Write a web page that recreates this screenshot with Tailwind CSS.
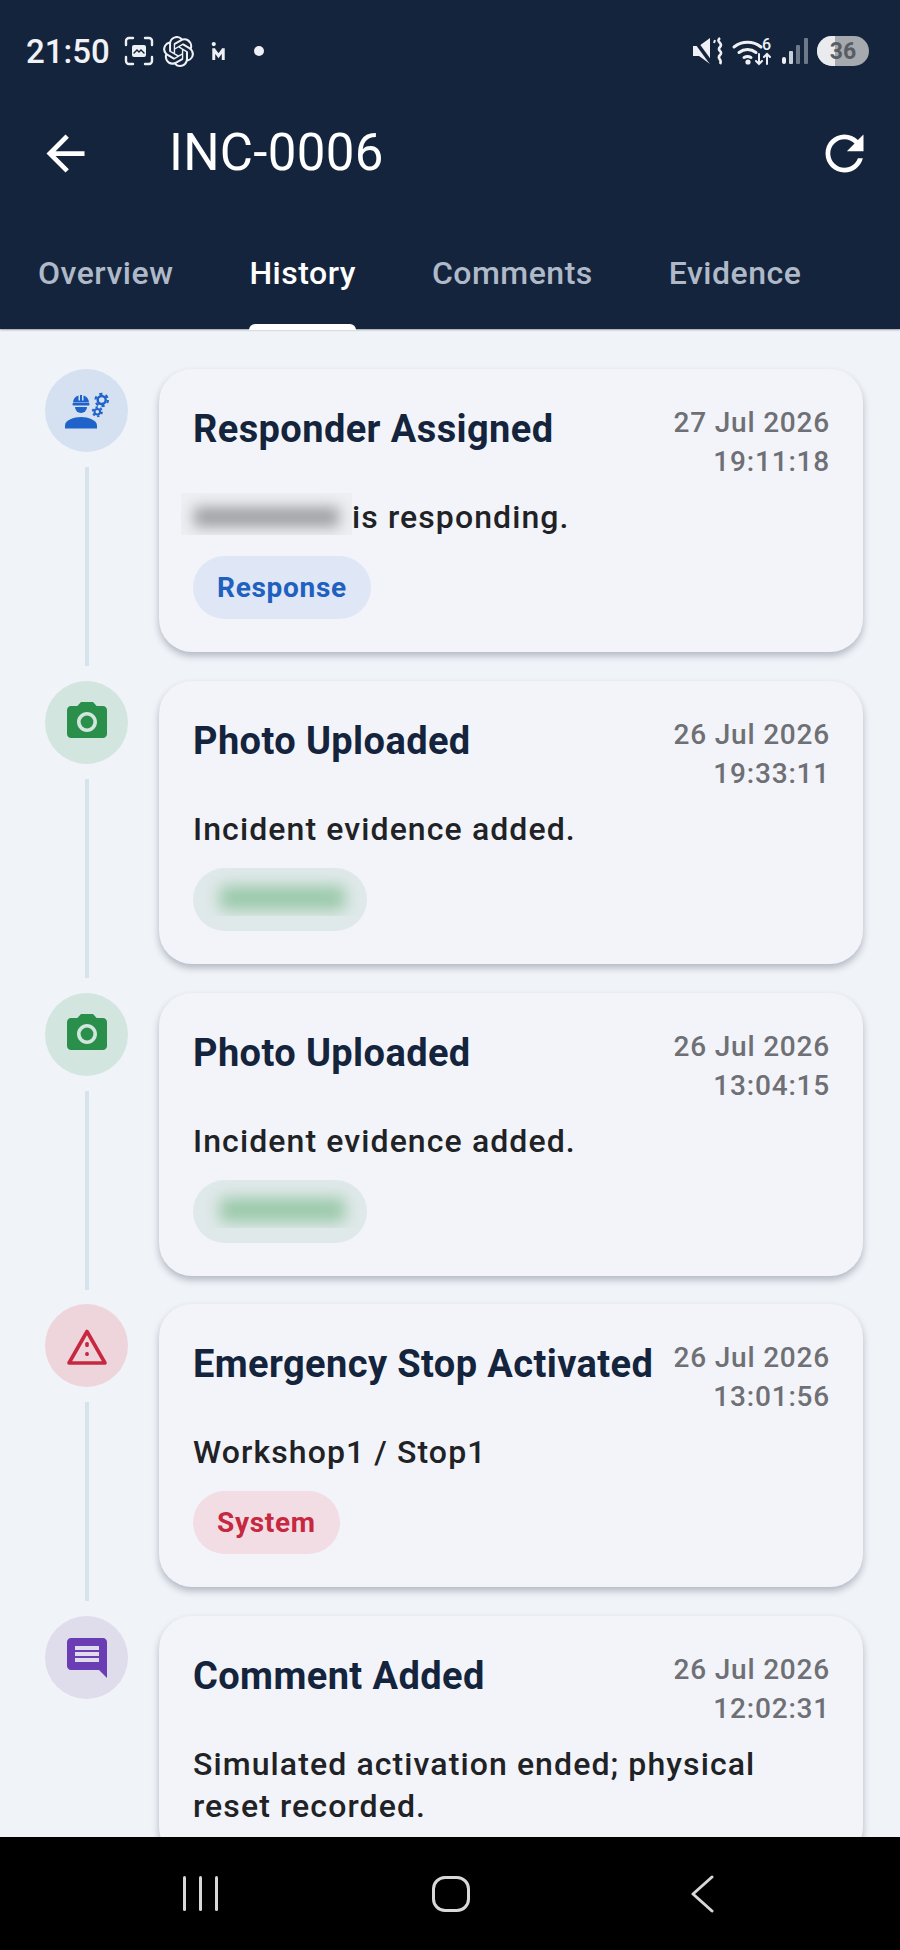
<!DOCTYPE html>
<html lang="en">
<head>
    <meta charset="UTF-8">
    <meta name="viewport" content="width=device-width, initial-scale=1.0">
    <title>INC-0006 - History</title>
    <script src="https://cdn.jsdelivr.net/npm/@tailwindcss/browser@4"></script>
</head>
<body class="bg-[#f0f3f8] font-['Roboto',sans-serif]">
<div class="w-[900px] h-[1950px] flex flex-col overflow-hidden">

    <!-- Header -->
    <header class="h-[329px] shrink-0 bg-[#14243c] text-white flex flex-col relative z-10 shadow-[0_1px_2px_rgba(0,0,0,0.3)]">
        <!-- Status bar -->
        <div class="h-[102px] flex items-center justify-between pl-[26px] pr-[31px]">
            <div class="flex items-center">
                <span class="text-[33px] font-medium leading-none text-[#f0f2f6] w-[98px]">21:50</span>
                <svg class="w-[30px] h-[30px]" viewBox="0 0 30 30" fill="none" stroke="#eef0f4" stroke-width="2.4" stroke-linecap="round">
                    <path d="M2 9V5a3 3 0 0 1 3-3h4M21 2h4a3 3 0 0 1 3 3v4M28 21v4a3 3 0 0 1-3 3h-4M9 28H5a3 3 0 0 1-3-3v-4"/>
                    <rect x="8" y="9" width="14" height="12" rx="2" fill="#eef0f4" stroke="none"/>
                    <path d="M10 17l3-3 2 2 2-2 3 3" stroke="#14243c" stroke-width="1.4"/>
                </svg>
                <svg class="w-[31px] h-[31px] ml-[9px]" viewBox="0 0 24 24" fill="#eef0f4">
                    <path d="M22.2819 9.8211a5.9847 5.9847 0 0 0-.5157-4.9108 6.0462 6.0462 0 0 0-6.5098-2.9A6.0651 6.0651 0 0 0 4.9807 4.1818a5.9847 5.9847 0 0 0-3.9977 2.9 6.0462 6.0462 0 0 0 .7427 7.0966 5.98 5.98 0 0 0 .511 4.9107 6.051 6.051 0 0 0 6.5146 2.9001A5.9847 5.9847 0 0 0 13.2599 24a6.0557 6.0557 0 0 0 5.7718-4.2058 5.9894 5.9894 0 0 0 3.9977-2.9001 6.0557 6.0557 0 0 0-.7475-7.0729zm-9.022 12.6081a4.4755 4.4755 0 0 1-2.8764-1.0408l.1419-.0804 4.7783-2.7582a.7948.7948 0 0 0 .3927-.6813v-6.7369l2.02 1.1686a.071.071 0 0 1 .038.052v5.5826a4.504 4.504 0 0 1-4.4945 4.4944zm-9.6607-4.1254a4.4708 4.4708 0 0 1-.5346-3.0137l.142.0852 4.783 2.7582a.7712.7712 0 0 0 .7806 0l5.8428-3.3685v2.3324a.0804.0804 0 0 1-.0332.0615L9.74 19.9502a4.4992 4.4992 0 0 1-6.1408-1.6464zM2.3408 7.8956a4.485 4.485 0 0 1 2.3655-1.9728V11.6a.7664.7664 0 0 0 .3879.6765l5.8144 3.3543-2.0201 1.1685a.0757.0757 0 0 1-.071 0l-4.8303-2.7865A4.504 4.504 0 0 1 2.3408 7.872zm16.5963 3.8558L13.1038 8.364 15.1192 7.2a.0757.0757 0 0 1 .071 0l4.8303 2.7913a4.4944 4.4944 0 0 1-.6765 8.1042v-5.6772a.79.79 0 0 0-.407-.667zm2.0107-3.0231l-.142-.0852-4.7735-2.7818a.7759.7759 0 0 0-.7854 0L9.409 9.2297V6.8974a.0662.0662 0 0 1 .0284-.0615l4.8303-2.7866a4.4992 4.4992 0 0 1 6.6802 4.66zM8.3065 12.863l-2.02-1.1638a.0804.0804 0 0 1-.038-.0567V6.0742a4.4992 4.4992 0 0 1 7.3757-3.4537l-.142.0805L8.704 5.459a.7948.7948 0 0 0-.3927.6813zm1.0976-2.3654l2.602-1.4998 2.6069 1.4998v2.9994l-2.5974 1.4997-2.6067-1.4997Z"/>
                </svg>
                <svg class="w-[15px] h-[19px] ml-[17px]" viewBox="0 0 14 18" fill="none" stroke="#eef0f4" stroke-width="2.8">
                    <circle cx="2.500" cy="2" r="2" fill="#eef0f4" stroke="none"/>
                    <path d="M2.500 6v11M2.500 7l4.500 6 4.500-6M11.500 6v11"/>
                </svg>
                <span class="w-[10px] h-[10px] rounded-full bg-[#eef0f4] ml-[28px]"></span>
            </div>
            <div class="flex items-center">
                <svg class="w-[30px] h-[28px]" viewBox="0 0 30 28" fill="none">
                    <path d="M0 9h6l11-8v26L6 19H0z" fill="#eef0f4"/>
                    <path d="M0 1l19 26" stroke="#14243c" stroke-width="3.600"/>
                    <path d="M22 3l-1 3" stroke="#eef0f4" stroke-width="2"/>
                    <path d="M27 1c-5 4 4 5 0 9s4 4 0 8 3 4 0 9" stroke="#eef0f4" stroke-width="2.600"/>
                </svg>
                <svg class="w-[41px] h-[30px] ml-[9px] overflow-visible" viewBox="0 0 41 30" fill="none" stroke="#eef0f4" stroke-width="3" stroke-linecap="round">
                    <path d="M2 11a22 22 0 0 1 27 0M7 16.500a14 14 0 0 1 17 0M12 21.500a7 7 0 0 1 7 0"/>
                    <circle cx="16" cy="26" r="2.600" fill="#eef0f4" stroke="none"/>
                    <path d="M27 18v10M24 25l3 3 3-3M35 28V18M32 21l3-3 3 3" stroke-width="2"/>
                    <text x="30" y="14" fill="#eef0f4" stroke="none" font-size="16" font-weight="500" font-family="Roboto, sans-serif">6</text>
                </svg>
                <svg class="w-[26px] h-[28px] ml-[9px]" viewBox="0 0 26 28">
                    <rect x="0" y="20" width="4" height="7" rx="2" fill="#eef0f4"/>
                    <rect x="7" y="14" width="4" height="13" rx="1" fill="#c9ced6"/>
                    <rect x="14" y="8" width="4" height="19" rx="1" fill="#6d7888"/>
                    <rect x="22" y="1" width="4" height="26" rx="1" fill="#6d7888"/>
                </svg>
                <div class="w-[52px] h-[30px] rounded-full bg-[#a6a9ae] ml-[9px] overflow-hidden relative flex items-center justify-center">
                    <div class="absolute left-0 top-0 bottom-0 w-[18px] bg-[#e9ebef]"></div>
                    <span class="relative text-[23px] font-bold text-[#585d65] leading-none">36</span>
                </div>
            </div>
        </div>

        <!-- App bar -->
        <div class="h-[102px] flex items-center justify-between pl-[37px] pr-[27px]">
            <div class="flex items-center">
                <svg class="w-[57px] h-[57px]" viewBox="0 0 24 24" fill="white"><path d="M20 11H7.830l5.590-5.590L12 4l-8 8 8 8 1.410-1.410L7.830 13H20v-2z"/></svg>
                <h1 class="text-[51px] font-normal leading-none ml-[75px] mb-[2px] tracking-[0.3px]">INC-0006</h1>
            </div>
            <svg class="w-[57px] h-[57px]" viewBox="0 0 24 24" fill="white"><path d="M17.650 6.350C16.200 4.900 14.210 4 12 4c-4.420 0-7.990 3.580-7.990 8s3.570 8 7.990 8c3.730 0 6.840-2.550 7.730-6h-2.080c-.82 2.330-3.040 4-5.650 4-3.310 0-6-2.690-6-6s2.690-6 6-6c1.660 0 3.140.69 4.220 1.780L13 11h7V4l-2.350 2.350z"/></svg>
        </div>

        <!-- Tabs -->
        <nav class="flex flex-1 text-[32px] font-medium text-[#b0b9c8] tracking-[0.5px]">
            <a class="px-[38px] pt-[45px]">Overview</a>
            <a class="px-[38px] pt-[45px] text-white relative">History
                <span class="absolute left-[38px] right-[38px] bottom-[-1px] h-[6px] bg-white rounded-t-[6px]"></span>
            </a>
            <a class="px-[38px] pt-[45px]">Comments</a>
            <a class="px-[38px] pt-[45px]">Evidence</a>
        </nav>
    </header>

    <!-- Timeline -->
    <main class="flex-1 min-h-0 overflow-hidden pt-[39px] pl-[45px] pr-[37px] border-t border-[#e3e7ee]">

        <!-- Responder Assigned -->
        <div class="flex gap-[31px] pb-[28.75px]">
            <div class="w-[83px] shrink-0 flex flex-col items-center">
                <div class="w-[83px] h-[83px] rounded-full bg-[#d5e1f1] flex items-center justify-center">
                    <svg class="w-[48px] h-[48px]" viewBox="0 0 48 48" fill="#1f62c9">
                        <path d="M10 15.500a8 8 0 0 1 5.500-7v5h1.500V8h2v5.500h1.500v-5a8 8 0 0 1 5.500 7z"/>
                        <rect x="9.500" y="16" width="17" height="2.500" rx="1"/>
                        <path d="M12 20h12a6 6 0 0 1-12 0z"/>
                        <path d="M2 41.500v-3C2 33 11 30 18 30s16 3 16 8.500v3z"/>
                        <circle cx="38.700" cy="13" r="4" fill="none" stroke="#1f62c9" stroke-width="2.400"/>
                        <circle cx="38.700" cy="13" r="6.200" fill="none" stroke="#1f62c9" stroke-width="2.200" stroke-dasharray="3.200 3.300"/>
                        <circle cx="34.300" cy="24.700" r="2.800" fill="none" stroke="#1f62c9" stroke-width="2"/>
                        <circle cx="34.300" cy="24.700" r="4.600" fill="none" stroke="#1f62c9" stroke-width="1.800" stroke-dasharray="2.400 2.420"/>
                    </svg>
                </div>
                <div class="w-[4px] flex-1 bg-[#d6e2ec] mt-[15px] mb-[-14px]"></div>
            </div>
            <div class="flex-1 min-w-0 bg-[#f3f4f9] rounded-[33px] pt-[34px] px-[34px] pb-[33px] shadow-[0_4px_7px_rgba(40,50,70,0.3)]">
                <div class="flex justify-between">
                    <h2 class="text-[38px] leading-[52px] font-bold text-[#14243c] whitespace-nowrap tracking-[0.4px]">Responder Assigned</h2>
                    <p class="text-[28px] leading-[39px] font-medium text-[#6e7075] text-right tracking-[0.8px] whitespace-nowrap -mr-[1px]">27 Jul 2026<br>19:11:18</p>
                </div>
                <div class="flex items-start mt-[15px] text-[32px] leading-[42px] font-medium text-[#202226] tracking-[1.1px]">
                    <div class="w-[171px] h-[42px] -ml-[12px] -mt-[3px] overflow-hidden flex items-center justify-center bg-[#eeeff3] shrink-0">
                        <div class="w-[145px] h-[20px] mt-[6px] bg-[#a0a1a4] blur-[7px]"></div>
                    </div>
                    <span>is responding.</span>
                </div>
                <div class="mt-[18px] inline-flex h-[63px] items-center px-[24px] rounded-full bg-[#dfe6f5] text-[28px] font-bold text-[#2060bf] tracking-[0.7px]">Response</div>
            </div>
        </div>

        <!-- Photo Uploaded -->
        <div class="flex gap-[31px] pb-[28.75px]">
            <div class="w-[83px] shrink-0 flex flex-col items-center">
                <div class="w-[83px] h-[83px] rounded-full bg-[#d3e5df] flex items-center justify-center">
                    <svg class="w-[48px] h-[48px]" viewBox="0 0 24 24" fill="#2a8f4b"><path fill-rule="evenodd" d="M9 2 7.170 4H4c-1.100 0-2 .9-2 2v12c0 1.100.9 2 2 2h16c1.100 0 2-.9 2-2V6c0-1.100-.9-2-2-2h-3.170L15 2H9zm3 15c-2.760 0-5-2.240-5-5s2.240-5 5-5 5 2.240 5 5-2.240 5-5 5z"/><circle cx="12" cy="12" r="3.200"/></svg>
                </div>
                <div class="w-[4px] flex-1 bg-[#d6e2ec] mt-[15px] mb-[-14px]"></div>
            </div>
            <div class="flex-1 min-w-0 bg-[#f3f4f9] rounded-[33px] pt-[34px] px-[34px] pb-[33px] shadow-[0_4px_7px_rgba(40,50,70,0.3)]">
                <div class="flex justify-between">
                    <h2 class="text-[38px] leading-[52px] font-bold text-[#14243c] whitespace-nowrap tracking-[0.4px]">Photo Uploaded</h2>
                    <p class="text-[28px] leading-[39px] font-medium text-[#6e7075] text-right tracking-[0.8px] whitespace-nowrap -mr-[1px]">26 Jul 2026<br>19:33:11</p>
                </div>
                <p class="mt-[15px] text-[32px] leading-[42px] font-medium text-[#202226] tracking-[1.1px]">Incident evidence added.</p>
                <div class="mt-[18px] w-[174px] h-[63px] rounded-full bg-[#e0e9ea] overflow-hidden">
                    <div class="w-[155px] h-[48px] ml-[12px] overflow-hidden flex items-center justify-center">
                        <div class="w-[125px] h-[24px] mt-[12px] bg-[#98c8a8] blur-[8px]"></div>
                    </div>
                </div>
            </div>
        </div>

        <div class="flex gap-[31px] pb-[28.75px]">
            <div class="w-[83px] shrink-0 flex flex-col items-center">
                <div class="w-[83px] h-[83px] rounded-full bg-[#d3e5df] flex items-center justify-center">
                    <svg class="w-[48px] h-[48px]" viewBox="0 0 24 24" fill="#2a8f4b"><path fill-rule="evenodd" d="M9 2 7.170 4H4c-1.100 0-2 .9-2 2v12c0 1.100.9 2 2 2h16c1.100 0 2-.9 2-2V6c0-1.100-.9-2-2-2h-3.170L15 2H9zm3 15c-2.760 0-5-2.240-5-5s2.240-5 5-5 5 2.240 5 5-2.240 5-5 5z"/><circle cx="12" cy="12" r="3.200"/></svg>
                </div>
                <div class="w-[4px] flex-1 bg-[#d6e2ec] mt-[15px] mb-[-14px]"></div>
            </div>
            <div class="flex-1 min-w-0 bg-[#f3f4f9] rounded-[33px] pt-[34px] px-[34px] pb-[33px] shadow-[0_4px_7px_rgba(40,50,70,0.3)]">
                <div class="flex justify-between">
                    <h2 class="text-[38px] leading-[52px] font-bold text-[#14243c] whitespace-nowrap tracking-[0.4px]">Photo Uploaded</h2>
                    <p class="text-[28px] leading-[39px] font-medium text-[#6e7075] text-right tracking-[0.8px] whitespace-nowrap -mr-[1px]">26 Jul 2026<br>13:04:15</p>
                </div>
                <p class="mt-[15px] text-[32px] leading-[42px] font-medium text-[#202226] tracking-[1.1px]">Incident evidence added.</p>
                <div class="mt-[18px] w-[174px] h-[63px] rounded-full bg-[#e0e9ea] overflow-hidden">
                    <div class="w-[155px] h-[48px] ml-[12px] overflow-hidden flex items-center justify-center">
                        <div class="w-[125px] h-[24px] mt-[12px] bg-[#98c8a8] blur-[8px]"></div>
                    </div>
                </div>
            </div>
        </div>

        <!-- Emergency Stop -->
        <div class="flex gap-[31px] pb-[28.75px]">
            <div class="w-[83px] shrink-0 flex flex-col items-center">
                <div class="w-[83px] h-[83px] rounded-full bg-[#eed5dc] flex items-center justify-center">
                    <svg class="w-[48px] h-[48px]" viewBox="0 0 48 48" fill="#c8283f">
                        <path d="M24 9.500 42 41H6z" fill="none" stroke="#c8283f" stroke-width="3.600" stroke-linejoin="round"/>
                        <rect x="22.200" y="20" width="3.600" height="5" rx="1.500"/>
                        <rect x="22.200" y="30" width="3.600" height="4" rx="1.500"/>
                    </svg>
                </div>
                <div class="w-[4px] flex-1 bg-[#d6e2ec] mt-[15px] mb-[-14px]"></div>
            </div>
            <div class="flex-1 min-w-0 bg-[#f3f4f9] rounded-[33px] pt-[34px] px-[34px] pb-[33px] shadow-[0_4px_7px_rgba(40,50,70,0.3)]">
                <div class="flex justify-between">
                    <h2 class="text-[38px] leading-[52px] font-bold text-[#14243c] whitespace-nowrap tracking-[0.4px]">Emergency Stop Activated</h2>
                    <p class="text-[28px] leading-[39px] font-medium text-[#6e7075] text-right tracking-[0.8px] whitespace-nowrap -mr-[1px]">26 Jul 2026<br>13:01:56</p>
                </div>
                <p class="mt-[15px] text-[32px] leading-[42px] font-medium text-[#202226] tracking-[1.1px]">Workshop1 / Stop1</p>
                <div class="mt-[18px] inline-flex h-[63px] items-center px-[24px] rounded-full bg-[#f3dde4] text-[28px] font-bold text-[#c62840] tracking-[0.7px]">System</div>
            </div>
        </div>

        <!-- Comment Added -->
        <div class="flex gap-[31px]">
            <div class="w-[83px] shrink-0 flex flex-col items-center">
                <div class="w-[83px] h-[83px] rounded-full bg-[#dfdcec] flex items-center justify-center">
                    <svg class="w-[48px] h-[48px]" viewBox="0 0 24 24" fill="#6a3db5"><path d="M20 2H4c-1.100 0-2 .9-2 2v12c0 1.100.9 2 2 2h14l4 4V4c0-1.100-.9-2-2-2zm-2 12H6v-2h12v2zm0-3H6V9h12v2zm0-3H6V6h12v2z"/></svg>
                </div>
            </div>
            <div class="flex-1 min-w-0 bg-[#f3f4f9] rounded-[33px] pt-[34px] px-[34px] pb-[33px] shadow-[0_4px_7px_rgba(40,50,70,0.3)]">
                <div class="flex justify-between">
                    <h2 class="text-[38px] leading-[52px] font-bold text-[#14243c] whitespace-nowrap tracking-[0.4px]">Comment Added</h2>
                    <p class="text-[28px] leading-[39px] font-medium text-[#6e7075] text-right tracking-[0.8px] whitespace-nowrap -mr-[1px]">26 Jul 2026<br>12:02:31</p>
                </div>
                <p class="mt-[15px] text-[32px] leading-[42px] font-medium text-[#202226] tracking-[1.1px]">Simulated activation ended; physical reset recorded.</p>
            </div>
        </div>
    </main>

    <!-- Android navigation bar -->
    <footer class="h-[113px] shrink-0 bg-black relative z-10 flex items-center pl-[183px] pr-[186px] justify-between">
        <div class="flex gap-[13px]">
            <span class="w-[3px] h-[35px] bg-[#d8d8d8] rounded-full"></span>
            <span class="w-[3px] h-[35px] bg-[#d8d8d8] rounded-full"></span>
            <span class="w-[3px] h-[35px] bg-[#d8d8d8] rounded-full"></span>
        </div>
        <div class="w-[38px] h-[36px] border-[3px] border-[#d8d8d8] rounded-[13px] mr-[6px]"></div>
        <svg class="w-[24px] h-[38px]" viewBox="0 0 24 38" fill="none" stroke="#d8d8d8" stroke-width="3" stroke-linecap="round" stroke-linejoin="round"><path d="M22 2 3 19l19 17"/></svg>
    </footer>
</div>
</body>
</html>
